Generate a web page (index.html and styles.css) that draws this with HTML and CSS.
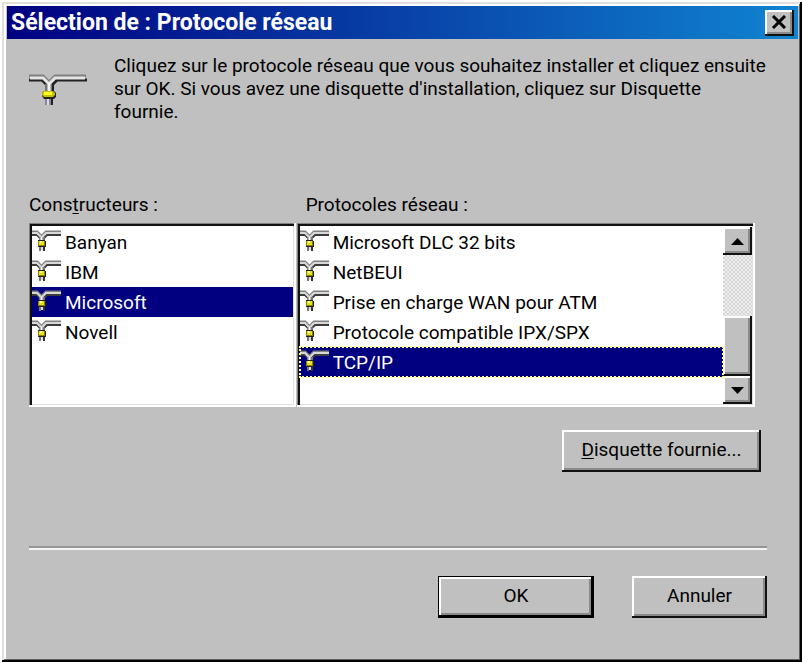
FILE: index.html
```html
<!DOCTYPE html>
<html lang="fr">
<head>
<meta charset="utf-8">
<meta name="viewport" content="width=device-width, initial-scale=1">
<title>Sélection de : Protocole réseau</title>
<link rel="stylesheet" href="styles.css">
</head>
<body>
<svg class="defs" width="0" height="0" aria-hidden="true">
  <symbol id="tap" viewBox="0 0 29 22">
    <path d="M0 6H5L9 10M29 6H15L11 10" fill="none" stroke="#3c3c3c" stroke-width="2"/>
    <path d="M0 3H5L9.500 7.500L14 3H29" fill="none" stroke="#808080" stroke-width="3"/>
    <path d="M0 4H5L9.500 8.500L14 4H29" fill="none" stroke="#d8d8d8" stroke-width="2"/>
    <path d="M7 8H13V12H7Z" fill="#777"/>
    <path d="M9.500 8V12" stroke="#fff" stroke-width="2"/>
    <path d="M7 18H9V22H7Z" fill="#777"/>
    <path d="M9 18H11V21H9Z" fill="#ddd"/>
    <path d="M11 18H13V22H11Z" fill="#333"/>
    <path d="M6 11H13V12H14V18H6Z" fill="#222"/>
    <path d="M6 12H13V17H6Z" fill="#8a8500"/>
    <path d="M7 12H12V16H7Z" fill="#e6df20"/>
    <path d="M8 12H10V14H8Z" fill="#ffffa0"/>
  </symbol>
</svg>
<main class="dialog">
  <header class="titlebar">
    <h1>Sélection de : Protocole réseau</h1>
    <button class="raised close" type="button" aria-label="Fermer">
      <svg width="16" height="14" viewBox="0 0 16 14" aria-hidden="true"><path d="M2 1L14 13M14 1L2 13" stroke="#000" stroke-width="3"/></svg>
    </button>
  </header>
  <form class="content">
    <div class="intro">
      <svg class="intro-icon" width="58" height="32" viewBox="0 0 58 32" aria-hidden="true">
        <path d="M0 6H13L20 13M58 6H28L21 13" fill="none" stroke="#222" stroke-width="3"/>
        <path d="M0 2H14L20 8L26 2H57" fill="none" stroke="#808080" stroke-width="3" />
        <path d="M1 4H14L20 10L26 4H56" fill="none" stroke="#e4e4e4" stroke-width="3"/>
        <path d="M16 10H24V19H16Z" fill="#777"/>
        <path d="M24 10V19" stroke="#222" stroke-width="2"/>
        <path d="M20 9V19" stroke="#f4f4f4" stroke-width="3"/>
        <path d="M16 24H24V31H16Z" fill="#8b86a0"/>
        <path d="M19 24V31" stroke="#ddd" stroke-width="2"/>
        <path d="M23 24V31" stroke="#222" stroke-width="2"/>
        <path d="M15 17H25L27 19V23L25 25H15L13 22V19Z" fill="#222"/>
        <path d="M15 17H24L26 19V21L24 23H15L13 21V19Z" fill="#c8c000"/>
        <path d="M15 18H23V21H15Z" fill="#ffff20"/>
      </svg>
      <p>Cliquez sur le protocole réseau que vous souhaitez installer et cliquez ensuite<br> sur OK. Si vous avez une disquette d'installation, cliquez sur Disquette<br> fournie.</p>
    </div>
    <div class="lists">
      <section class="makers">
        <h2 id="makers-label">Cons<u>t</u>ructeurs :</h2>
        <div class="listbox" role="radiogroup" aria-labelledby="makers-label">
          <div class="options">
            <label><input type="radio" name="maker"><svg aria-hidden="true"><use href="#tap"/></svg><span>Banyan</span></label>
            <label><input type="radio" name="maker"><svg aria-hidden="true"><use href="#tap"/></svg><span>IBM</span></label>
            <label><input type="radio" name="maker" checked><svg aria-hidden="true"><use href="#tap"/></svg><span>Microsoft</span></label>
            <label><input type="radio" name="maker"><svg aria-hidden="true"><use href="#tap"/></svg><span>Novell</span></label>
          </div>
        </div>
      </section>
      <section class="protocols">
        <h2 id="protocols-label">Protocoles réseau :</h2>
        <div class="listbox" role="radiogroup" aria-labelledby="protocols-label">
          <div class="options">
            <label><input type="radio" name="protocol"><svg aria-hidden="true"><use href="#tap"/></svg><span>Microsoft DLC 32 bits</span></label>
            <label><input type="radio" name="protocol"><svg aria-hidden="true"><use href="#tap"/></svg><span>NetBEUI</span></label>
            <label><input type="radio" name="protocol"><svg aria-hidden="true"><use href="#tap"/></svg><span>Prise en charge WAN pour ATM</span></label>
            <label><input type="radio" name="protocol"><svg aria-hidden="true"><use href="#tap"/></svg><span>Protocole compatible IPX/SPX</span></label>
            <label class="focused"><input type="radio" name="protocol" checked><svg aria-hidden="true"><use href="#tap"/></svg><span>TCP/IP</span></label>
          </div>
          <div class="scrollbar">
            <button class="raised arrow" type="button" aria-label="Défiler vers le haut"><svg width="13" height="7" viewBox="0 0 13 7"><path d="M0 7L6.500 0L13 7Z"/></svg></button>
            <div class="track"></div>
            <div class="raised thumb"></div>
            <button class="raised arrow" type="button" aria-label="Défiler vers le bas"><svg width="13" height="7" viewBox="0 0 13 7"><path d="M0 0L6.500 7L13 0Z"/></svg></button>
          </div>
        </div>
      </section>
    </div>
    <div class="disk-row">
      <button class="raised push disk" type="button"><span><u>D</u>isquette fournie...</span></button>
    </div>
    <hr>
    <div class="actions">
      <button class="raised push ok" type="button">OK</button>
      <button class="raised push cancel" type="button">Annuler</button>
    </div>
  </form>
</main>
</body>
</html>
```
FILE: styles.css
```css
* {
  box-sizing: border-box;
}

body {
  margin: 0;
  padding: 2px 1px 0 2px;
  background: #fff;
  color: #000;
  font: 19px/23px Roboto, "Liberation Sans", Arial, sans-serif;
}

button {
  font: inherit;
  color: inherit;
  padding: 0;
}

u {
  text-underline-offset: 2px;
  text-decoration-thickness: 1px;
}

.defs {
  position: absolute;
}

.dialog {
  min-height: calc(100vh - 2px);
  padding: 4px 4px 4px 5px;
  background: #c0c0c0;
  box-shadow:
    inset -2px -2px #000,
    inset 2px 2px #dfdfdf,
    inset -3px -3px #606060,
    inset 4px 4px #fff;
}

.titlebar {
  display: flex;
  align-items: center;
  justify-content: space-between;
  height: 33px;
  padding: 0 4px;
  background: linear-gradient(90deg, #000080, #1084d0);
  color: #fff;
}

h1 {
  margin: 0;
  font-size: 23px;
  line-height: 24px;
}

.raised {
  border: 0;
  border-radius: 0;
  background: #c0c0c0;
  box-shadow:
    inset -2px -2px #111,
    inset 2px 2px #fff,
    inset -4px -4px #8a8a8a;
}

.close {
  display: grid;
  place-items: center;
  width: 29px;
  height: 26px;
  padding: 0 2px 2px 0;
}

.content {
  padding: 15px 31px 40px 22px;
}

.intro {
  display: flex;
  align-items: flex-start;
  gap: 27px;
  min-height: 139px;
}

.intro-icon {
  flex: none;
  margin-top: 20px;
}

.intro p {
  margin: 0;
}

.lists {
  display: grid;
  grid-template-columns: 267fr 459fr;
  gap: 1px;
  padding-right: 12px;
}

h2 {
  margin: 0 0 7px;
  font-size: 19px;
  font-weight: 400;
  line-height: 23px;
}

.protocols h2 {
  padding-left: 9px;
}

.listbox {
  display: flex;
  min-height: 184px;
  padding: 4px 3px 3px 3px;
  background: #fff;
  box-shadow:
    inset -2px -2px #fff,
    inset 1px 1px #808080,
    inset 3px 3px #111,
    inset -3px -3px #dfdfdf;
}

.options {
  flex: 1;
}

.options label {
  position: relative;
  display: flex;
  align-items: center;
  gap: 4px;
  height: 30px;
}

.options input {
  position: absolute;
  margin: 0;
  opacity: 0;
}

.options svg {
  flex: none;
  align-self: flex-start;
  width: 29px;
  height: 22px;
  margin-top: 2px;
}

.options label:has(:checked) {
  background: #000080;
  color: #fff;
}

.options .focused {
  outline: 2px dotted #ff8;
  outline-offset: -1px;
}

.scrollbar {
  display: flex;
  flex-direction: column;
  width: 29px;
}

.arrow {
  display: grid;
  place-items: center;
  height: 28px;
}

.track {
  flex: 1;
  background: repeating-conic-gradient(#d4d4d4 0 25%, #f0f0f0 0 50%) 0 0 / 4px 4px;
}

.thumb {
  height: 60px;
}

.disk-row {
  display: flex;
  justify-content: flex-end;
  padding: 23px 6px 0 0;
}

.push {
  height: 42px;
  padding-bottom: 3px;
}

.disk {
  width: 199px;
}

hr {
  height: 4px;
  margin: 74px 0 26px;
  border: 0;
  border-top: 2px solid #969696;
  border-bottom: 2px solid #f4f4f4;
}

.actions {
  display: flex;
  justify-content: flex-end;
  gap: 38px;
}

.ok {
  width: 156px;
  box-shadow:
    inset 0 0 0 1px #000,
    inset -3px -3px #000,
    inset 3px 3px #fff,
    inset -5px -5px #8a8a8a;
}

.cancel {
  width: 135px;
}
```
